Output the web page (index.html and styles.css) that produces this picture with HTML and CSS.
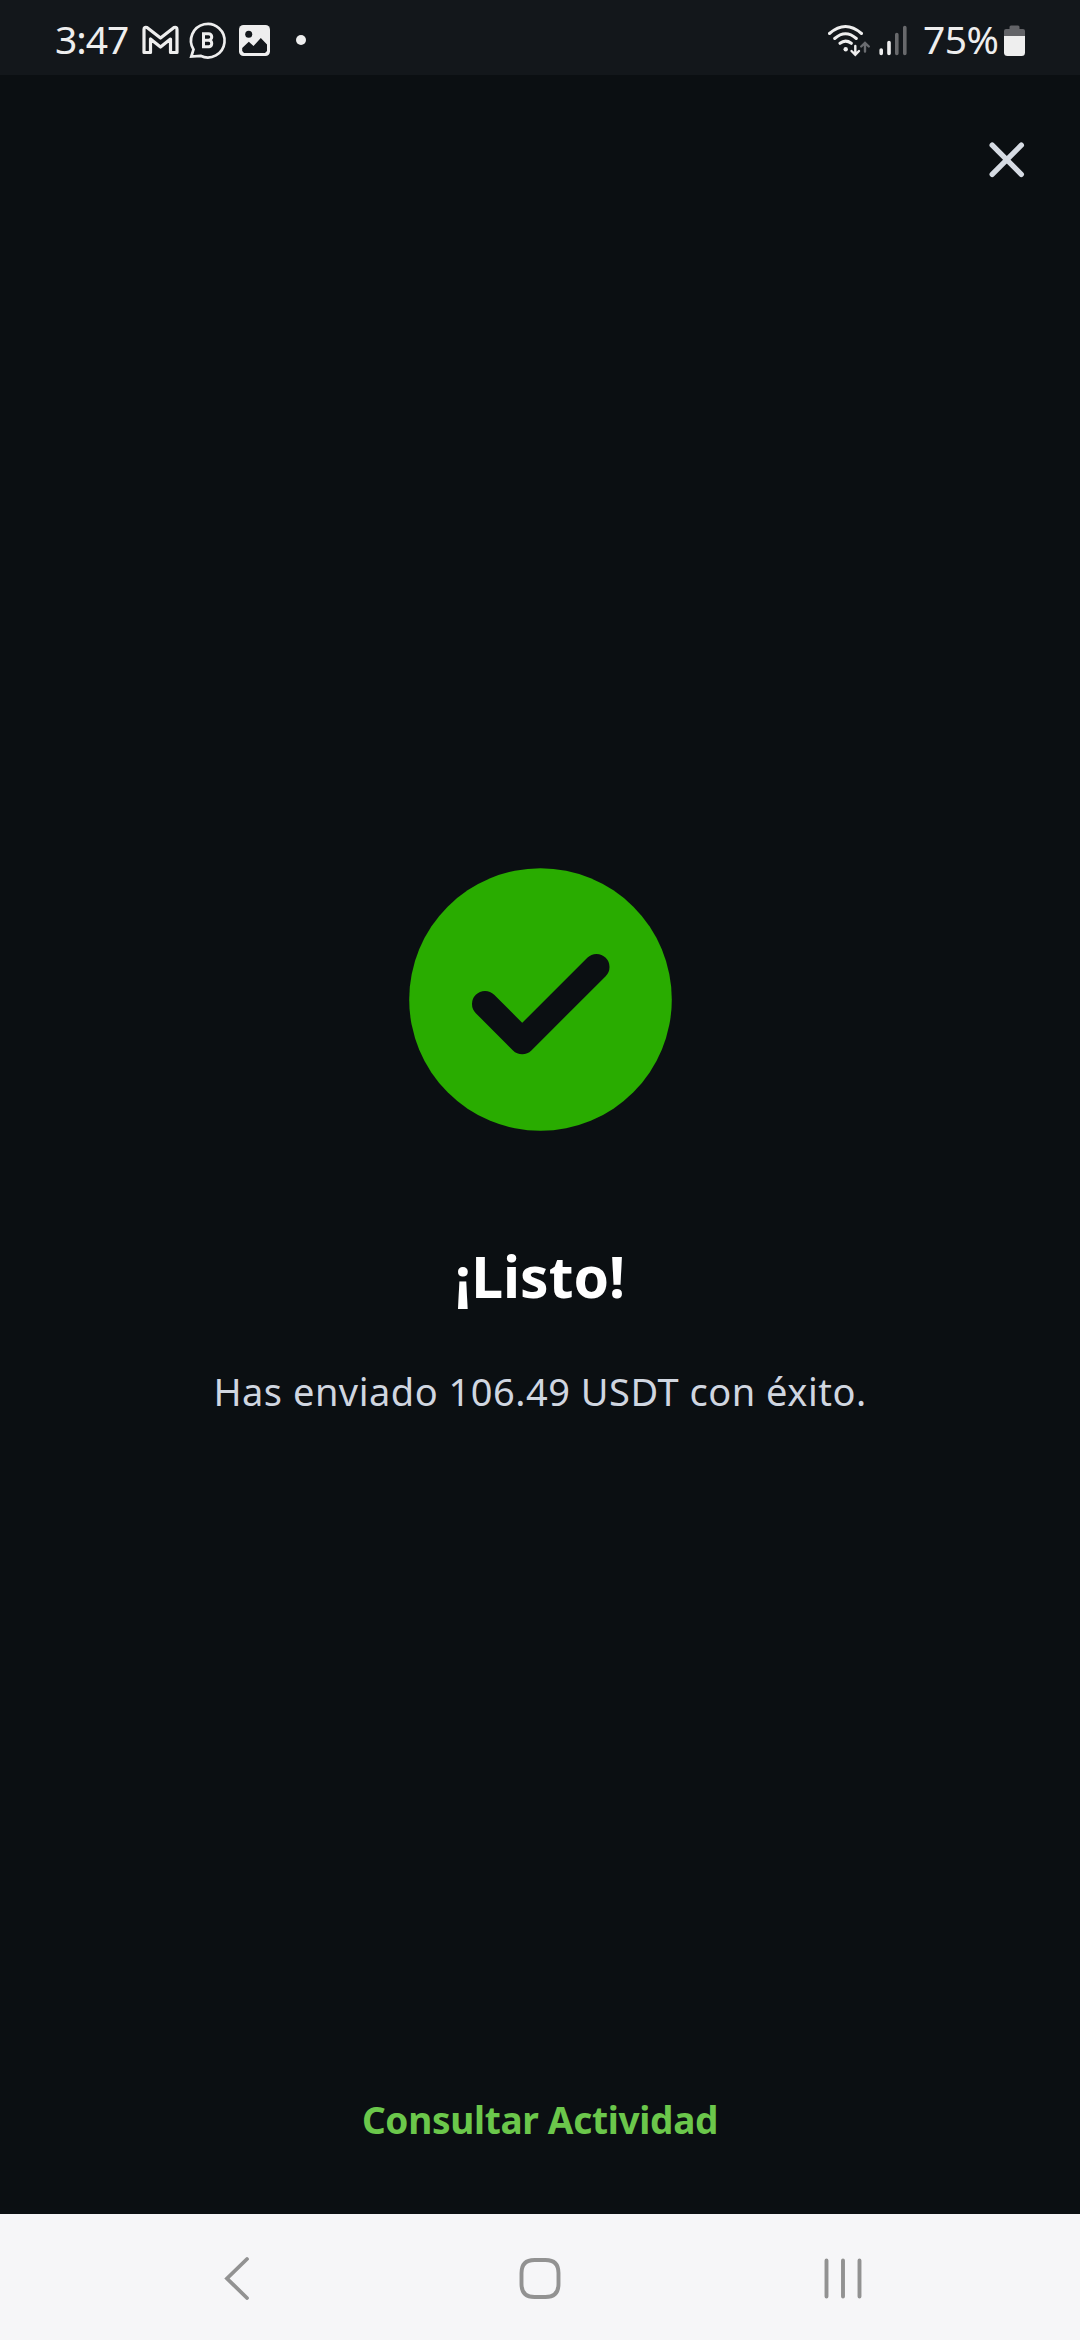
FILE: index.html
```html
<!DOCTYPE html>
<html lang="es">
<head>
<meta charset="utf-8">
<title>Envío completado</title>
<link rel="stylesheet" href="styles.css">
</head>
<body>
<div class="screen">
  <header class="status-bar">
    <span class="clock">3:47</span>
    <svg class="notifications" width="170" height="75" viewBox="140 0 170 75" fill="none" stroke="#eee">
      <path d="M144 52.500V29.500Q144 26.500 147 27.500L160.500 38L174 27.500Q177 26.500 177 29.500V52.500H170.500V39L160.500 47L150.500 39V52.500Z" stroke-width="3.200" stroke-linejoin="round"/>
      <path d="M193.500 49.500A16.800 16.800 0 1 1 200.500 55.800L191.300 56.500Z" stroke-width="2.700"/>
      <path d="M203.500 33.700H208.500A3.200 3.200 0 0 1 208.500 40.200H203.500ZM203.500 40.200H209A3.300 3.300 0 0 1 209 46.700H203.500Z" stroke-width="3"/>
      <rect x="239" y="25" width="31" height="31" rx="4.500" fill="#eee" stroke="none"/>
      <circle cx="248.700" cy="34.300" r="3.500" fill="#13171b" stroke="none"/>
      <path d="M242.200 48L248.800 41.800L253.500 46L260.800 38L267 44.500V51L265 53H244L242.200 51Z" fill="#13171b" stroke="none"/>
      <circle cx="301" cy="40" r="5" fill="#eee" stroke="none"/>
    </svg>
    <svg class="signals" width="82" height="75" viewBox="828 0 82 75" fill="none" stroke="#eee" stroke-linecap="round">
      <path d="M829.500 33.500Q845.500 19.500 861.500 33.500M834.700 38.500Q845.500 29 856.300 38.500M840 43.300Q845.500 39 851.300 43.300" stroke-width="3"/>
      <circle cx="845.700" cy="49.300" r="2.200" fill="#eee" stroke="none"/>
      <path d="M855.300 46V54.500M851.500 51L855.300 54.700L859 51" stroke-width="2.400"/>
      <path d="M865 51.500V43M861.200 46.500L865 42.800L868.800 46.500" stroke="#6a6c70" stroke-width="2.400"/>
      <path d="M881.200 50V53.500M889 42.500V53.500" stroke-width="3.600"/>
      <path d="M896.800 34.500V53.500M904.800 27.500V53.500" stroke="#68696c" stroke-width="3.600"/>
    </svg>
    <span class="charge">75%</span>
    <svg class="battery" width="21" height="75" viewBox="1004 0 21 75">
      <path d="M1004 36V31Q1004 29 1006 29H1009.500V27Q1009.500 25.500 1011 25.500H1018Q1019.500 25.500 1019.500 27V29H1023Q1025 29 1025 31V36Z" fill="#626367"/>
      <path d="M1004 36H1025V52.500Q1025 56 1021.500 56H1007.500Q1004 56 1004 52.500Z" fill="#eee"/>
    </svg>
  </header>
  <main class="content">
    <button class="close" aria-label="Cerrar">
      <svg width="36" height="36" viewBox="0 0 36 36"><path d="M3.200 3.200L32.300 32.300M32.300 3.200L3.200 32.300" fill="none" stroke="#d6dbe3" stroke-width="5.400" stroke-linecap="round"/></svg>
    </button>
    <svg class="success" width="263" height="263" viewBox="409 868 263 263">
      <circle cx="540.500" cy="999.500" r="131.300" fill="#29ac00"/>
      <path d="M485 1004L522.200 1041.200L596.500 967" fill="none" stroke="#0b0f12" stroke-width="26" stroke-linecap="round" stroke-linejoin="round"/>
    </svg>
    <h1 class="title">¡Listo!</h1>
    <p class="message">Has enviado 106.49 USDT con éxito.</p>
    <a class="activity">Consultar Actividad</a>
  </main>
  <nav class="nav-bar">
    <svg width="44" height="44" viewBox="215 2256 44 44"><path d="M247 2259L227 2278.500L247 2298" fill="none" stroke="#929292" stroke-width="3.800" stroke-linecap="round"/></svg>
    <svg width="44" height="44" viewBox="517.500 2256 44 44"><path d="M521 2278.500V2273Q521 2260 534 2260H545Q558 2260 558 2273V2284Q558 2297 545 2297H534Q521 2297 521 2284Z" fill="none" stroke="#929292" stroke-width="3.900"/></svg>
    <svg width="44" height="44" viewBox="820.500 2256 44 44"><path d="M826 2260.500V2296.500M842.500 2260.500V2296.500M859 2260.500V2296.500" fill="none" stroke="#929292" stroke-width="3.900" stroke-linecap="round"/></svg>
  </nav>
</div>
</body>
</html>
```
FILE: styles.css
```css
* { box-sizing: border-box; }
body {
  margin: 0;
  background: #0b0f12;
  font-family: "Noto Sans", sans-serif;
}
svg { display: block; flex: none; }
.screen {
  display: flex;
  flex-direction: column;
  width: 1080px;
  height: 2340px;
}
.status-bar {
  display: flex;
  height: 75px;
  padding: 0 55px;
  background: #13171b;
  color: #eee;
  font-size: 39px;
  line-height: 77px;
}
.clock { width: 85px; letter-spacing: -1px; }
.signals { margin-left: auto; }
.charge { width: 81px; margin-left: 13px; letter-spacing: -0.5px; }
.content {
  display: flex;
  flex: 1;
  flex-direction: column;
  align-items: center;
}
.close {
  align-self: flex-end;
  margin: 67px 55px 0 0;
  padding: 0;
  border: 0;
  background: none;
}
.success { margin-top: 690px; }
.title {
  margin: 105px 0 0;
  color: #fff;
  font-size: 57px;
  font-weight: 700;
  line-height: 80px;
}
.message {
  margin: 48px 0 0;
  color: #d0d6e0;
  font-size: 38px;
  line-height: 54px;
  letter-spacing: 0.5px;
  white-space: nowrap;
}
.activity {
  margin: auto 0 67px;
  color: #6bc74b;
  font-size: 37px;
  font-weight: 700;
  line-height: 54px;
  letter-spacing: -0.3px;
}
.nav-bar {
  display: flex;
  align-items: center;
  justify-content: space-between;
  height: 126px;
  padding: 2px 215px 0;
  background: #f6f6f8;
}
```
